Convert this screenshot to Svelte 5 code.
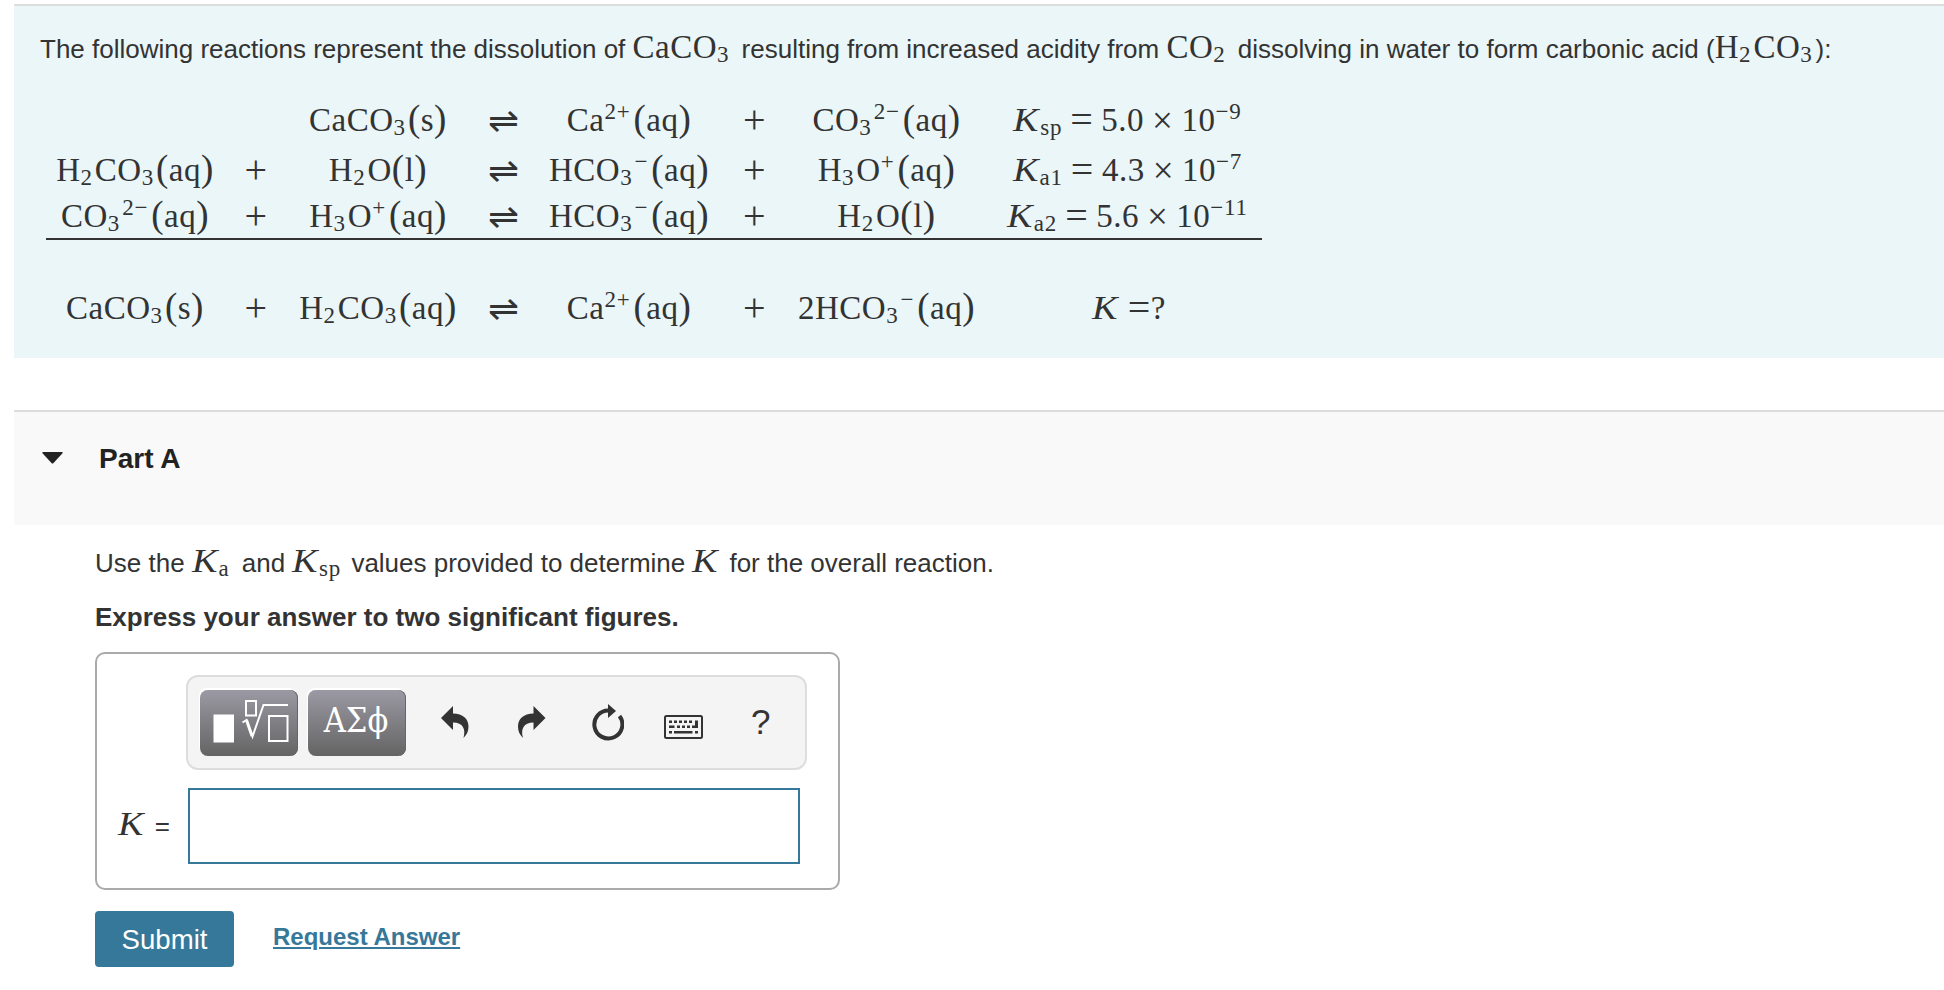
<script>
	// formulas use _{..} for subscripts and ^{..} for superscripts
	const reactions = [
		['', '', 'CaCO_{3}(s)', '⇌', 'Ca^{2+}(aq)', '+', 'CO_{3}^{2−}(aq)', 'K_{sp} = 5.0 × 10^{−9}'],
		['H_{2}CO_{3}(aq)', '+', 'H_{2}O(l)', '⇌', 'HCO_{3}^{−}(aq)', '+', 'H_{3}O^{+}(aq)', 'K_{a1} = 4.3 × 10^{−7}'],
		['CO_{3}^{2−}(aq)', '+', 'H_{3}O^{+}(aq)', '⇌', 'HCO_{3}^{−}(aq)', '+', 'H_{2}O(l)', 'K_{a2} = 5.6 × 10^{−11}'],
	];
	const overall = ['CaCO_{3}(s)', '+', 'H_{2}CO_{3}(aq)', '⇌', 'Ca^{2+}(aq)', '+', '2HCO_{3}^{−}(aq)', 'K =?'];

	let answer = $state('');
	let open = $state(true);

	function parse(src) {
		return src
			.split(/([_^]\{[^}]*\}|= |[()+=×⇌K])/)
			.filter((s) => s.trim() !== '')
			.map((s) => {
				if (s[0] === '_') return { kind: 'sub', text: s.slice(2, -1) };
				if (s[0] === '^') return { kind: 'sup', text: s.slice(2, -1) };
				if (s === '(' || s === ')') return { kind: 'paren', text: s };
				if (s === '+') return { kind: 'op', text: s };
				if (s === '×') return { kind: 'op times', text: s };
				if (s === '= ') return { kind: 'op rel', text: '=' };
				if (s === '=') return { kind: 'op tight', text: s };
				if (s === '⇌') return { kind: 'harpoon', text: s };
				if (s === 'K') return { kind: 'var', text: s };
				return { kind: 'main', text: s.trim() };
			});
	}
</script>

{#snippet math(src)}
	<span class="math">{#each parse(src) as t}<span class={t.kind}>{t.text}</span>{/each}</span>
{/snippet}

{#snippet row(cells)}
	<div class="row">
		{#each cells as cell}
			<div class="cell">{@render math(cell)}</div>
		{/each}
	</div>
{/snippet}

<main>
	<section class="intro">
		<p>
			The following reactions represent the dissolution of
			{@render math('CaCO_{3}')}
			<span class="after">resulting from increased acidity from</span>
			{@render math('CO_{2}')}
			<span class="after">dissolving in water to form carbonic acid (</span>{@render math('H_{2}CO_{3}')}<span class="close">):</span>
		</p>
		<div class="reactions">
			{#each reactions as cells}
				{@render row(cells)}
			{/each}
		</div>
		<div class="overall">
			{@render row(overall)}
		</div>
	</section>

	<button class="part" type="button" aria-expanded={open} onclick={() => (open = !open)}>
		<svg width="21" height="12" viewBox="0 0 21 12"><path d="M1 0h19q1.200 .3.3 1.500L11.500 11q-1 1-2 0L.7 1.500Q-.2.3 1 0z" fill="#222" /></svg>
		<span>Part A</span>
	</button>

	{#if open}
		<section class="body">
			<p class="question">
				Use the {@render math('K_{a}')} <span class="after">and</span> {@render math('K_{sp}')} <span class="values">values provided to determine</span> {@render math('K')} <span class="after">for the overall reaction.</span>
			</p>
			<p class="hint">Express your answer to two significant figures.</p>

			<div class="answer">
				<div class="toolbar">
					<button class="tool dark" type="button" aria-label="Templates">
						<svg width="98" height="66" viewBox="0 0 98 66" fill="none" stroke="#fff" stroke-width="2">
							<rect x="13.500" y="24.500" width="20.500" height="28" fill="#fff" stroke="none" />
							<rect x="46" y="11" width="10" height="14.500" />
							<path d="M42.500 32.500l4-2.500 6 16.500L63.500 15H88" />
							<path d="M46.500 30l5.500 16" stroke-width="3" />
							<rect x="69" y="26" width="18.500" height="25" />
						</svg>
					</button>
					<button class="tool dark greek" type="button">ΑΣϕ</button>
					<button class="tool undo" type="button" aria-label="Undo">
						<svg width="28" height="32" viewBox="0 0 28 32" fill="#333"><path d="M0 12L12 0v7.500C22 7.500 27.500 13 27.500 20.500c0 4.500-1.500 8-5 11.500C25 23 22 16.500 12 16.500V24z" /></svg>
					</button>
					<button class="tool redo" type="button" aria-label="Redo">
						<svg width="28" height="32" viewBox="0 0 28 32" fill="#333"><path d="M27.500 12L15.500 0v7.500C5.500 7.500 0 13 0 20.500 0 25 1.500 28.500 5 32 2.500 23 5.500 16.500 15.500 16.500V24z" /></svg>
					</button>
					<button class="tool reset" type="button" aria-label="Reset">
						<svg width="32" height="37" viewBox="0 0 32 37">
							<path d="M17 6.500A14 14 0 1 0 27.500 12" fill="none" stroke="#333" stroke-width="4" />
							<path d="M16 0l8 7-8 7z" fill="#333" />
						</svg>
					</button>
					<button class="tool keyboard" type="button" aria-label="Keyboard">
						<svg width="39" height="24" viewBox="0 0 39 24" fill="#333">
							<rect x="1" y="1" width="37" height="22" rx="1.500" fill="none" stroke="#333" stroke-width="2" />
							<path d="M5 5.500h3v2.500H5zM10 5.500h3v2.500h-3zM15 5.500h3v2.500h-3zM20 5.500h3v2.500h-3zM25 5.500h3v2.500h-3zM31 5.500h3v7.500h-6v-2.500h3zM5 10.500h5.500v2.500H5zM13 10.500h3v2.500h-3zM18 10.500h3v2.500h-3zM23 10.500h3v2.500h-3zM5 16h3v2.500H5zM10 16h18.500v2.500H10zM31 16h3v2.500h-3z" />
						</svg>
					</button>
					<button class="tool help" type="button">?</button>
				</div>
				<label class="entry">
					<span class="lead">{@render math('K')}<span class="eq">=</span></span>
					<input type="text" bind:value={answer} aria-label="K" />
				</label>
			</div>

			<div class="actions">
				<button class="submit" type="button">Submit</button>
				<a href="#answer">Request Answer</a>
			</div>
		</section>
	{/if}
</main>

<style>
	:global(body) {
		background: #fff;
	}
	main {
		padding: 4px 0 0 14px;
		height: 986px;
		box-sizing: border-box;
		overflow: hidden;
		font-family: 'Liberation Sans', Arial, sans-serif;
		font-size: 26px;
		color: #333;
		white-space: nowrap;
	}
	p {
		margin: 0;
		line-height: 40px;
	}
	button {
		font: inherit;
		padding: 0;
		border: 0;
		background: none;
		color: inherit;
	}
	svg {
		display: block;
	}

	.math {
		font-family: 'Liberation Serif', 'Times New Roman', serif;
		font-size: 33px;
		letter-spacing: 0.5px;
		line-height: 0;
	}
	.math .sub,
	.math .sup {
		font-size: 23px;
		letter-spacing: 0.8px;
		margin-right: 2px;
	}
	.math .sub {
		vertical-align: -4px;
	}
	.math .sup {
		vertical-align: 12px;
		margin-right: 3px;
	}
	.math .paren {
		font-size: 37px;
	}
	.math .op {
		font-size: 40px;
		vertical-align: -2px;
		margin: 0 5px;
	}
	.math .rel {
		margin: 0 8px 0 6px;
	}
	.math .tight {
		margin: 0 0 0 9px;
	}
	.math .times {
		font-size: 37px;
		margin: 0 8px;
	}
	.math .var {
		display: inline-block;
		font-size: 34px;
		font-style: italic;
		letter-spacing: 0;
		transform: scaleX(1.12);
		transform-origin: left;
		margin-right: 4px;
	}
	.math .harpoon {
		font-family: 'DejaVu Sans', sans-serif;
		font-size: 37px;
		font-weight: 200;
		letter-spacing: 0;
		vertical-align: -2px;
		margin-left: -2px;
	}
	.after {
		margin-left: 3px;
	}
	.values {
		margin-left: 1px;
	}
	.close {
		margin-left: 1px;
	}

	.intro {
		height: 354px;
		box-sizing: border-box;
		border-top: 2px solid #ddd;
		background: #eaf6f8;
		padding: 23px 0 0 26px;
	}
	.reactions {
		width: 1216px;
		margin: 29px 0 0 6px;
		border-bottom: 2px solid #333;
	}
	.overall {
		margin: 46px 0 0 6px;
	}
	.row {
		display: grid;
		grid-template-columns: 178px 64px 180px 72px 178px 73px 191px 271px;
		height: 44px;
		font-family: 'Liberation Serif', serif;
		font-size: 33px;
		line-height: 44px;
		text-align: center;
	}
	.reactions .row:nth-child(1) {
		height: 50px;
	}
	.reactions .row:nth-child(2) {
		height: 46px;
	}
	.cell:last-child {
		padding-left: 23px;
	}

	.part {
		display: flex;
		align-items: flex-start;
		gap: 36px;
		width: 100%;
		height: 115px;
		box-sizing: border-box;
		margin-top: 52px;
		padding: 29px 0 0 28px;
		border-top: 2px solid #ddd;
		background: #f9f9f9;
		color: #222;
		font-size: 28px;
		font-weight: bold;
		line-height: 36px;
	}
	.part svg {
		margin-top: 11px;
	}

	.body {
		padding-left: 81px;
	}
	.question {
		padding-top: 18px;
	}
	.hint {
		padding-top: 14px;
		font-weight: bold;
	}
	.answer {
		width: 745px;
		height: 238px;
		box-sizing: border-box;
		margin-top: 15px;
		padding: 21px 0 0 21px;
		border: 2px solid #aaa;
		border-radius: 10px;
	}
	.toolbar {
		display: flex;
		align-items: flex-start;
		width: 621px;
		height: 95px;
		box-sizing: border-box;
		margin-left: 68px;
		padding: 13px 0 0 12px;
		border: 2px solid #ddd;
		border-radius: 12px;
		background: #f4f4f4;
	}
	.dark {
		width: 98px;
		height: 66px;
		margin-right: 10px;
		border-radius: 8px;
		background: linear-gradient(#9b99a3, #646464);
		box-shadow: -1px -2px 0 #fff, inset -1px 0 0 #666;
		color: #fff;
	}
	.greek {
		font-family: 'DejaVu Serif Condensed', 'DejaVu Serif', serif;
		font-size: 34px;
		line-height: 60px;
		padding: 0 2px 6px 0;
	}
	.undo {
		margin: 16px 0 0 25px;
	}
	.redo {
		margin: 16px 0 0 49px;
	}
	.reset {
		margin: 14px 0 0 46px;
	}
	.keyboard {
		margin: 25px 0 0 40px;
	}
	.help {
		margin: 12px 0 0 48px;
		font-size: 35px;
		line-height: 40px;
	}
	.entry {
		display: flex;
		align-items: center;
		margin-top: 18px;
	}
	.lead {
		width: 70px;
		line-height: 40px;
	}
	.eq {
		margin-left: 10px;
	}
	input {
		width: 612px;
		height: 76px;
		box-sizing: border-box;
		border: 2px solid #367899;
		background: #fff;
		padding: 0 12px;
		font: inherit;
		outline: none;
	}
	.actions {
		display: flex;
		align-items: center;
		gap: 39px;
		margin-top: 21px;
	}
	.submit {
		width: 139px;
		height: 56px;
		border-radius: 4px;
		background: #367899;
		color: #fff;
		font-size: 27.6px;
		padding-top: 2px;
	}
	a {
		color: #367899;
		font-size: 24px;
		font-weight: bold;
		text-underline-offset: 2px;
		margin-top: -4px;
	}
</style>
